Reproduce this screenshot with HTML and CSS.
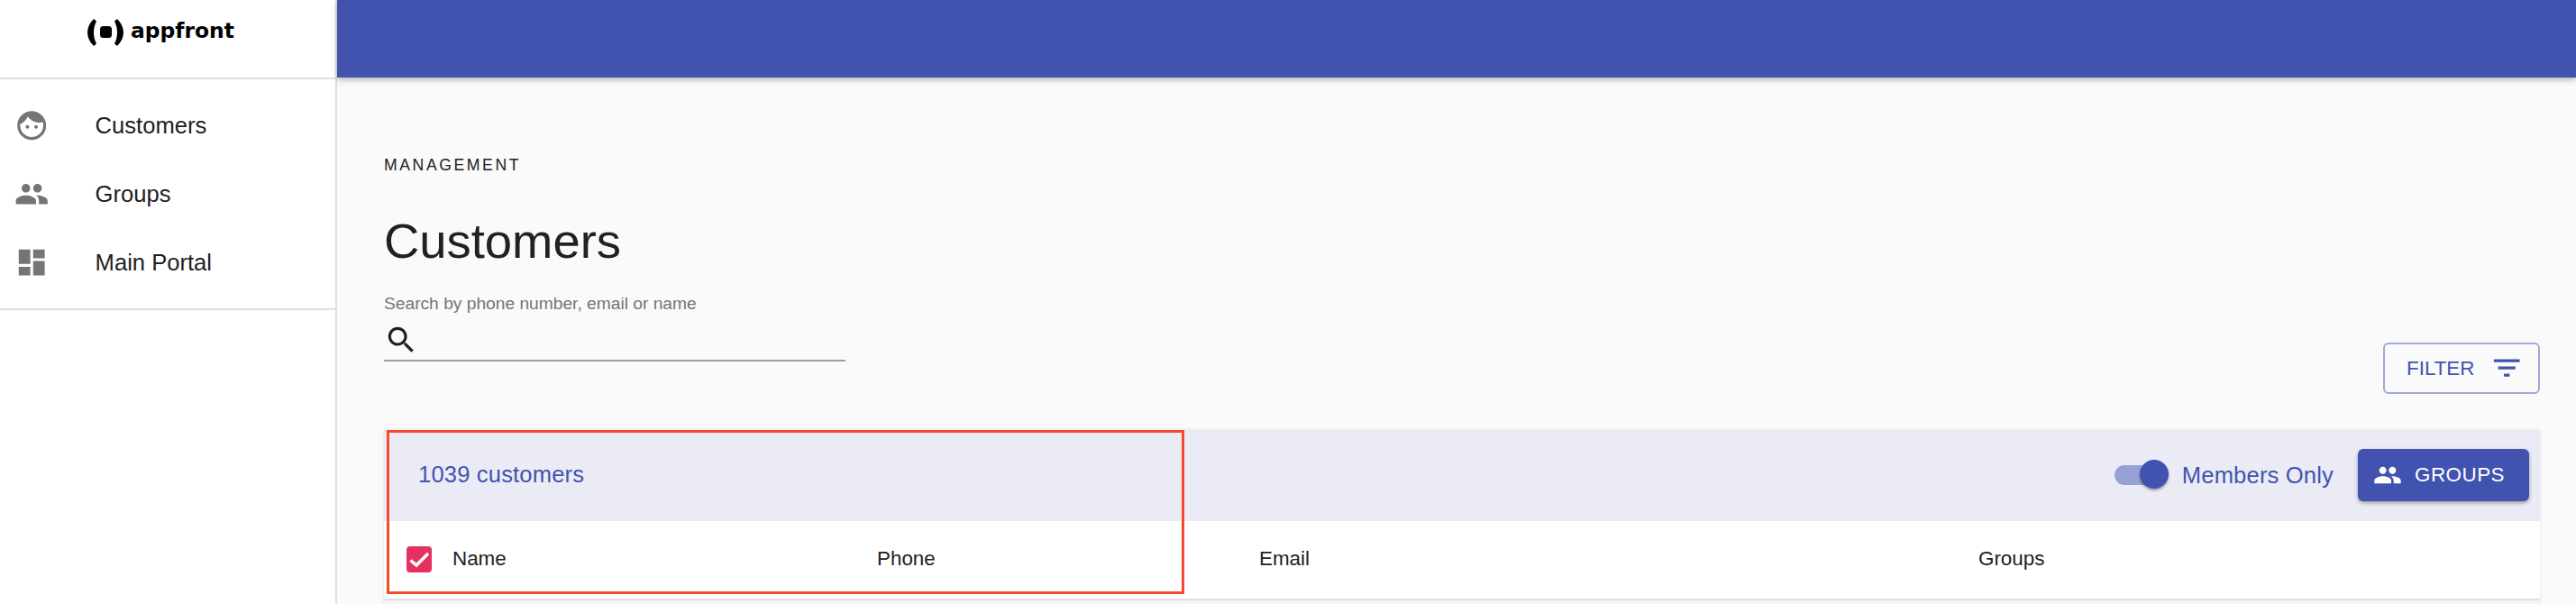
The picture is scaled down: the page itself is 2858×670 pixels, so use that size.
FILE: index.html

```html
<!DOCTYPE html>
<html lang="en">
<head>
    <meta charset="UTF-8">
    <title>Appfront Customers</title>
    <link rel="stylesheet" href="styles.css">
</head>
<body>
    <div class="app">
        <aside class="sidebar">
            <div class="logo">
                <svg class="logoMark" viewBox="0 0 40 30">
                    <path d="M7 0 C-2.300 9 -2.300 21 7 30 L10 27.500 C6 20 6 10 10 2.500 Z"/>
                    <rect x="14" y="8" width="13" height="13" rx="3.500"/>
                    <path d="M33 0 C42.300 9 42.300 21 33 30 L30 27.500 C34 20 34 10 30 2.500 Z"/>
                </svg>
                <span class="logoText">appfront</span>
            </div>
            <nav class="nav">
                <a class="navItem">
                    <svg class="navIcon" viewBox="0 0 24 24"><path d="M9 11.75c-.69 0-1.25.56-1.25 1.25s.56 1.25 1.25 1.25 1.25-.56 1.25-1.25-.56-1.25-1.25-1.25zm6 0c-.69 0-1.25.56-1.25 1.25s.56 1.25 1.25 1.25 1.25-.56 1.25-1.25-.56-1.25-1.25-1.25zM12 2C6.48 2 2 6.48 2 12s4.48 10 10 10 10-4.48 10-10S17.52 2 12 2zm0 18c-4.41 0-8-3.59-8-8 0-.29.02-.58.05-.86 2.36-1.05 4.23-2.98 5.21-5.37C11.07 8.33 14.05 10 17.42 10c.78 0 1.53-.09 2.25-.26.21.71.33 1.47.33 2.26 0 4.41-3.59 8-8 8z"/></svg>
                    <span>Customers</span>
                </a>
                <a class="navItem">
                    <svg class="navIcon" viewBox="0 0 24 24"><path d="M16 11c1.66 0 2.99-1.34 2.99-3S17.66 5 16 5c-1.66 0-3 1.34-3 3s1.34 3 3 3zm-8 0c1.66 0 2.99-1.34 2.99-3S9.66 5 8 5C6.34 5 5 6.34 5 8s1.34 3 3 3zm0 2c-2.33 0-7 1.17-7 3.5V19h14v-2.5c0-2.33-4.67-3.5-7-3.5zm8 0c-.29 0-.62.02-.97.05 1.16.84 1.97 1.97 1.97 3.45V19h6v-2.5c0-2.33-4.67-3.5-7-3.5z"/></svg>
                    <span>Groups</span>
                </a>
                <a class="navItem">
                    <svg class="navIcon" viewBox="0 0 24 24"><path d="M3 13h8V3H3v10zm0 8h8v-6H3v6zm10 0h8V11h-8v10zm0-18v6h8V3h-8z"/></svg>
                    <span>Main Portal</span>
                </a>
            </nav>
        </aside>

        <div class="main">
            <header class="topBar"></header>
            <section class="content">
                <p class="overline">MANAGEMENT</p>
                <h1 class="title">Customers</h1>
                <div class="controls">
                    <div class="search">
                        <label class="searchLabel">Search by phone number, email or name</label>
                        <div class="searchField">
                            <svg class="searchIcon" viewBox="0 0 24 24"><path d="M15.5 14h-.79l-.28-.27C15.41 12.59 16 11.11 16 9.5 16 5.91 13.09 3 9.5 3S3 5.91 3 9.5 5.91 16 9.5 16c1.61 0 3.09-.59 4.23-1.57l.27.28v.79l5 4.99L20.49 19l-4.99-5zm-6 0C7.01 14 5 11.99 5 9.5S7.01 5 9.5 5 14 7.01 14 9.5 11.99 14 9.5 14z"/></svg>
                        </div>
                    </div>
                    <button class="filterBtn">
                        <span>FILTER</span>
                        <svg class="filterIcon" viewBox="0 0 24 24"><path d="M10 18h4v-2h-4v2zM3 6v2h18V6H3zm3 7h12v-2H6v2z"/></svg>
                    </button>
                </div>

                <div class="tableCard">
                    <div class="toolbar">
                        <span class="count">1039 customers</span>
                        <div class="actions">
                            <span class="switch"><span class="thumb"></span></span>
                            <span class="switchLabel">Members Only</span>
                            <button class="groupsBtn">
                                <svg class="groupsIcon" viewBox="0 0 24 24"><path d="M16 11c1.66 0 2.99-1.34 2.99-3S17.66 5 16 5c-1.66 0-3 1.34-3 3s1.34 3 3 3zm-8 0c1.66 0 2.99-1.34 2.99-3S9.66 5 8 5C6.34 5 5 6.34 5 8s1.34 3 3 3zm0 2c-2.33 0-7 1.17-7 3.5V19h14v-2.5c0-2.33-4.67-3.5-7-3.5zm8 0c-.29 0-.62.02-.97.05 1.16.84 1.97 1.97 1.97 3.45V19h6v-2.5c0-2.33-4.67-3.5-7-3.5z"/></svg>
                                <span>GROUPS</span>
                            </button>
                        </div>
                    </div>
                    <div class="tableHead">
                        <span class="checkbox">
                            <svg viewBox="0 0 28 29"><path d="M4.500 15.500 L11 21 L24 8"/></svg>
                        </span>
                        <span>Name</span>
                        <span>Phone</span>
                        <span>Email</span>
                        <span>Groups</span>
                    </div>
                    <div class="tableRow"></div>
                    <div class="highlight"></div>
                </div>
            </section>
        </div>
    </div>
</body>
</html>
```

FILE: styles.css

```css
* {
    margin: 0;
    padding: 0;
    box-sizing: border-box;
}

html, body {
    height: 100%;
    overflow: hidden;
}

body {
    font-family: 'Liberation Sans', Arial, sans-serif;
    background-color: #fafafa;
    color: #212121;
}

.app {
    display: flex;
    height: 100%;
}

/* Sidebar */
.sidebar {
    flex: 0 0 374px;
    background-color: #fff;
    border-right: 2px solid #e0e0e0;
}

.logo {
    height: 88px;
    padding: 21px 0 0 97px;
    display: flex;
    align-items: flex-start;
    gap: 8px;
    border-bottom: 2px solid #e0e0e0;
}

.logoMark {
    width: 40px;
    height: 30px;
    fill: #000;
}

.logoText {
    font-family: 'DejaVu Sans', sans-serif;
    font-weight: 700;
    font-size: 23.4px;
    line-height: 26px;
    color: #000;
}

.nav {
    padding: 13px 0;
    border-bottom: 2px solid #e0e0e0;
}

.navItem {
    display: flex;
    align-items: center;
    height: 76px;
    padding-left: 16px;
    font-size: 25.6px;
    color: #212121;
}

.navIcon {
    flex: 0 0 38.4px;
    height: 38.4px;
    margin-right: 51.2px;
    fill: #757575;
}

/* Main */
.main {
    flex: 1;
    min-width: 0;
}

.topBar {
    height: 86px;
    background-color: #4153af;
    box-shadow: 0 3px 6px rgba(0, 0, 0, 0.25);
}

.content {
    padding: 87px 40px 0 52px;
}

.overline {
    font-size: 17.6px;
    line-height: 20px;
    letter-spacing: 2.6px;
}

.title {
    font-size: 54.4px;
    font-weight: 400;
    line-height: 64px;
    margin-top: 43px;
}

.controls {
    display: flex;
    justify-content: space-between;
    align-items: flex-end;
    margin-top: 25px;
}

.search {
    width: 512px;
}

.searchLabel {
    display: block;
    font-size: 19.2px;
    line-height: 24px;
    color: #757575;
}

.searchField {
    height: 43px;
    margin-top: 9px;
    border-bottom: 2px solid #9e9e9e;
}

.searchIcon {
    display: block;
    width: 38.4px;
    height: 38.4px;
    fill: #212121;
}

.filterBtn {
    display: flex;
    align-items: center;
    justify-content: space-between;
    width: 174px;
    height: 57px;
    margin-bottom: -36px;
    padding: 0 20px 0 24px;
    font-family: inherit;
    font-size: 22.4px;
    color: #4153af;
    background: transparent;
    border: 2px solid #9fa9dc;
    border-radius: 6px;
}

.filterIcon {
    width: 38.4px;
    height: 38.4px;
    fill: #4153af;
    margin-right: -4px;
}

/* Table */
.tableCard {
    position: relative;
    margin-top: 75px;
    box-shadow: 0 1px 3px rgba(0, 0, 0, 0.12);
}

.toolbar {
    display: flex;
    justify-content: space-between;
    align-items: center;
    height: 102px;
    padding: 0 12px 0 38px;
    background-color: #ebebf5;
}

.count {
    margin-bottom: 2px;
    font-size: 25.6px;
    letter-spacing: 0.15px;
    color: #4153af;
}

.actions {
    display: flex;
    align-items: center;
}

.switch {
    position: relative;
    width: 54px;
    height: 22px;
    background-color: #98a1d4;
    border-radius: 11px;
}

.thumb {
    position: absolute;
    top: -6px;
    right: -6px;
    width: 32px;
    height: 32px;
    border-radius: 50%;
    background-color: #4153af;
    box-shadow: 0 2px 3px rgba(0, 0, 0, 0.35);
}

.switchLabel {
    margin: 0 27px 0 21px;
    font-size: 25.6px;
    letter-spacing: 0.15px;
    color: #4153af;
}

.groupsBtn {
    display: flex;
    align-items: center;
    gap: 14px;
    width: 190px;
    height: 58px;
    padding-left: 17px;
    font-family: inherit;
    font-size: 22.4px;
    letter-spacing: 0.5px;
    color: #fff;
    background-color: #4153af;
    border: none;
    border-radius: 6px;
    box-shadow: 0 2px 4px rgba(0, 0, 0, 0.35);
}

.groupsIcon {
    width: 32px;
    height: 32px;
    fill: #fff;
}

.tableHead {
    display: grid;
    grid-template-columns: 51px 471px 424px 798px 1fr;
    align-items: center;
    height: 88px;
    padding: 0 0 2px 25px;
    font-size: 22.4px;
    background-color: #fff;
    border-bottom: 2px solid #e0e0e0;
}

.tableRow {
    height: 4px;
    background-color: #f5f5f5;
}

.checkbox {
    width: 28px;
    height: 29px;
    background-color: #e6305f;
    border-radius: 4px;
}

.checkbox svg {
    display: block;
    width: 28px;
    height: 29px;
    fill: none;
    stroke: #fff;
    stroke-width: 3.6;
}

/* Red annotation over the table */
.highlight {
    position: absolute;
    top: 1px;
    left: 3px;
    width: 885px;
    height: 182px;
    border: 3px solid #f44b2e;
    pointer-events: none;
}
```
